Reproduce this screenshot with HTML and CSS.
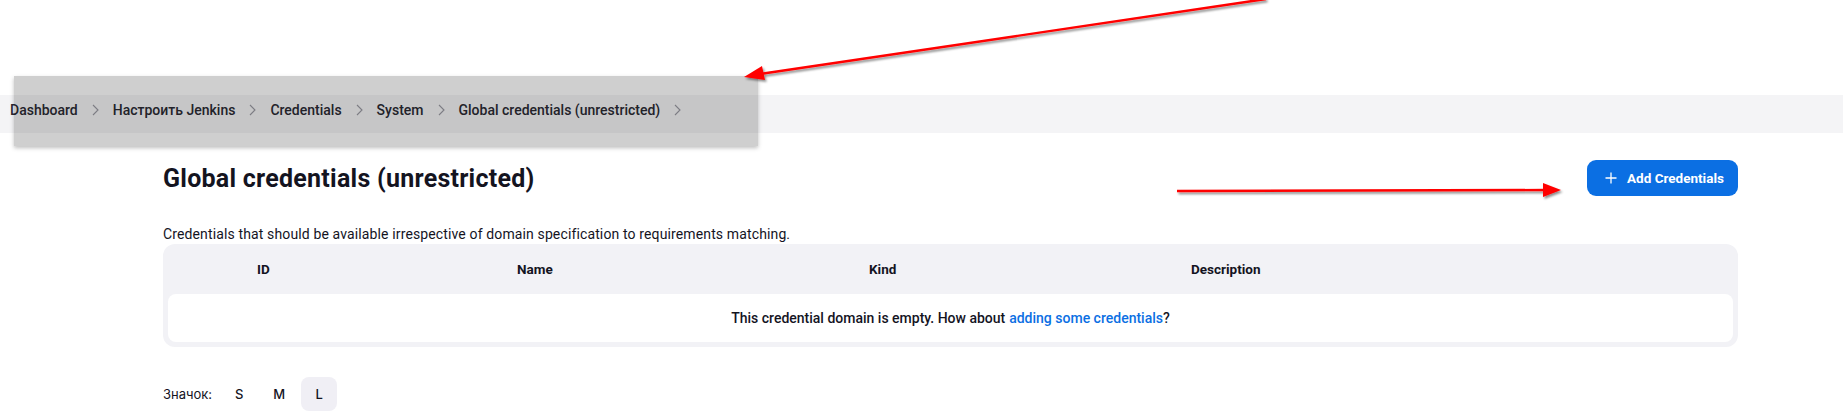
FILE: index.html
```html
<!DOCTYPE html>
<html lang="ru">
<head>
<meta charset="utf-8">
<title>Global credentials (unrestricted)</title>
<link rel="stylesheet" href="styles.css">
</head>
<body>
<header class="top"></header>
<nav class="crumbs">
  <a class="crumb">Dashboard</a><span class="sep"><svg viewBox="0 0 7 12" width="7" height="12"><path d="M1 1L6 6L1 11" fill="none" stroke="#9a9aa2" stroke-width="1.1"/></svg></span>
  <a class="crumb">Настроить Jenkins</a><span class="sep"><svg viewBox="0 0 7 12" width="7" height="12"><path d="M1 1L6 6L1 11" fill="none" stroke="#9a9aa2" stroke-width="1.1"/></svg></span>
  <a class="crumb">Credentials</a><span class="sep"><svg viewBox="0 0 7 12" width="7" height="12"><path d="M1 1L6 6L1 11" fill="none" stroke="#9a9aa2" stroke-width="1.1"/></svg></span>
  <a class="crumb">System</a><span class="sep"><svg viewBox="0 0 7 12" width="7" height="12"><path d="M1 1L6 6L1 11" fill="none" stroke="#9a9aa2" stroke-width="1.1"/></svg></span>
  <a class="crumb">Global credentials (unrestricted)</a><span class="sep"><svg viewBox="0 0 7 12" width="7" height="12"><path d="M1 1L6 6L1 11" fill="none" stroke="#9a9aa2" stroke-width="1.1"/></svg></span>
</nav>
<div class="shade"></div>
<main class="main">
  <div class="titlebar">
    <h1 class="title">Global credentials (unrestricted)</h1>
    <button class="btn-primary">
      <svg class="plus" viewBox="0 0 12 12" width="12" height="12"><path d="M6 0.5V11.5M0.5 6H11.5" stroke="#fff" stroke-width="1.3" fill="none"/></svg>
      <span>Add Credentials</span>
    </button>
  </div>
  <p class="desc">Credentials that should be available irrespective of domain specification to requirements matching.</p>
  <section class="card">
    <div class="thead">
      <span></span><span>ID</span><span>Name</span><span>Kind</span><span>Description</span>
    </div>
    <div class="empty">This credential domain is empty. How about <a class="link">adding some credentials</a>?</div>
  </section>
  <div class="sizes">
    <span class="sizes-label">Значок:</span>
    <span class="size">S</span>
    <span class="size">M</span>
    <span class="size size-active">L</span>
  </div>
</main>
<svg class="arrows" width="1843" height="415" viewBox="0 0 1843 415">
  <defs>
    <filter id="sh" x="-5%" y="-50%" width="110%" height="200%">
      <feDropShadow dx="1.5" dy="2" stdDeviation="1.2" flood-color="#000" flood-opacity="0.45"/>
    </filter>
  </defs>
  <g filter="url(#sh)" fill="#ff0000" stroke="#ff0000">
    <line x1="1266" y1="-1" x2="760" y2="74" stroke-width="2.4"/>
    <polygon points="744,77 762,66 765,80" stroke="none"/>
    <line x1="1177" y1="191" x2="1546" y2="190" stroke-width="2.4"/>
    <polygon points="1561,190 1543,183 1543,197" stroke="none"/>
  </g>
</svg>
</body>
</html>
```
FILE: styles.css
```css
html, body {
  margin: 0;
  padding: 0;
  background: #ffffff;
}
body {
  position: relative;
  width: 1843px;
  height: 415px;
  overflow: hidden;
  font-family: Roboto, "Noto Sans", sans-serif;
  color: #14141f;
}
.top {
  height: 95px;
}
.crumbs {
  box-sizing: border-box;
  height: 38px;
  padding: 0 0 8px 10px;
  background: #f4f4f6;
  display: flex;
  align-items: center;
  font-size: 14px;
  font-weight: 500;
  color: #2a2a33;
}
.crumb {
  white-space: nowrap;
}
.sep {
  width: 35px;
  display: flex;
  justify-content: center;
  align-items: center;
}
.sep svg {
  display: block;
}
.shade {
  position: absolute;
  left: 14px;
  top: 76px;
  width: 744px;
  height: 70px;
  background: rgba(0, 0, 0, 0.19);
  box-shadow: 0 2px 4px rgba(0, 0, 0, 0.25);
}
.main {
  padding: 27px 105px 0 163px;
}
.titlebar {
  display: flex;
  align-items: center;
  justify-content: space-between;
  height: 36px;
}
.title {
  margin: 0;
  font-size: 25px;
  font-weight: 700;
  letter-spacing: 0.25px;
}
.btn-primary {
  display: flex;
  align-items: center;
  gap: 10px;
  height: 36px;
  width: 151px;
  padding: 0 0 0 18px;
  border: none;
  border-radius: 9px;
  background: #0b6fe3;
  color: #ffffff;
  font-family: inherit;
  font-size: 13.5px;
  font-weight: 700;
}
.plus {
  display: block;
}
.desc {
  margin: 29px 0 0;
  font-size: 14px;
  line-height: 18px;
  letter-spacing: 0.13px;
}
.card {
  margin-top: 1px;
  background: #f2f2f6;
  border-radius: 12px;
  padding: 0 5px 5px;
}
.thead {
  display: grid;
  grid-template-columns: 89px 260px 352px 322px 1fr;
  height: 50px;
  align-items: center;
  font-size: 13.5px;
  font-weight: 700;
}
.empty {
  height: 48px;
  background: #ffffff;
  border-radius: 8px;
  display: flex;
  align-items: center;
  justify-content: center;
  font-size: 14px;
  font-weight: 500;
}
.link {
  color: #0b6fe3;
  margin-left: 4px;
}
.sizes {
  margin-top: 30px;
  display: flex;
  align-items: center;
  gap: 4px;
  font-family: Inter, "Noto Sans", sans-serif;
  font-size: 13px;
  color: #14141f;
}
.sizes-label {
  margin-right: 5px;
}
.size {
  width: 36px;
  height: 34px;
  display: flex;
  align-items: center;
  justify-content: center;
  font-weight: 500;
  border-radius: 8px;
}
.size-active {
  background: #f0eff5;
}
.arrows {
  position: absolute;
  left: 0;
  top: 0;
  pointer-events: none;
}
```
